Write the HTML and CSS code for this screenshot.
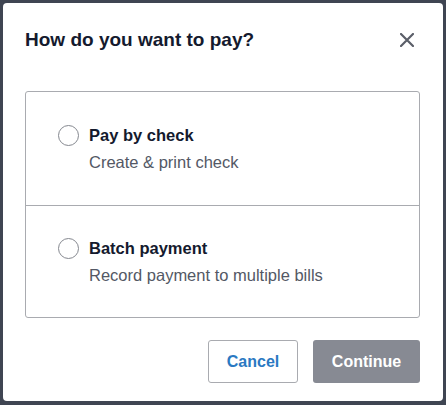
FILE: index.html
```html
<!DOCTYPE html>
<html>
<head>
    <title>How do you want to pay?</title>
    <link rel="stylesheet" href="styles.css">
</head>
<body>
    <div class="modal">
        <div class="modal-head">
            <h2>How do you want to pay?</h2>
            <button class="close" aria-label="Close">
                <svg width="14" height="14" viewBox="0 0 14 14"><path d="M1 1L13 13M13 1L1 13" stroke="#5b5f69" stroke-width="2.2" stroke-linecap="round"/></svg>
            </button>
        </div>
        <div class="options">
            <label class="option">
                <span class="radio"></span>
                <span class="text">
                    <span class="name">Pay by check</span>
                    <span class="desc">Create &amp; print check</span>
                </span>
            </label>
            <label class="option">
                <span class="radio"></span>
                <span class="text">
                    <span class="name">Batch payment</span>
                    <span class="desc">Record payment to multiple bills</span>
                </span>
            </label>
        </div>
        <div class="actions">
            <button class="btn btn-cancel">Cancel</button>
            <button class="btn btn-continue">Continue</button>
        </div>
    </div>
</body>
</html>
```

FILE: styles.css
```css
*{padding: 0;margin: 0;box-sizing: border-box;}
body{
    background: #3f4552;
    font-family: "Liberation Sans", Arial, sans-serif;
    padding: 3px;
}
.modal{
    width: 440px;
    height: 398px;
    background: #fff;
    border-radius: 4px;
    padding: 24px 23px 0 22px;
}
.modal-head{
    display: flex;
    align-items: center;
    justify-content: space-between;
    height: 26px;
}
.modal-head h2{
    font-size: 19px;
    font-weight: bold;
    color: #141a2e;
    line-height: 26px;
}
.close{
    border: none;
    background: none;
    width: 20px;
    height: 20px;
    display: flex;
    align-items: center;
    justify-content: center;
    margin-right: 3px;
}
.options{
    margin-top: 38px;
    border: 1px solid #a9abb0;
    border-radius: 3px;
}
.option{
    display: flex;
    align-items: flex-start;
    height: 113px;
    padding: 33px 0 0 32px;
}
.option + .option{
    border-top: 1px solid #a9abb0;
    height: 112px;
    padding-top: 32px;
}
.radio{
    width: 21px;
    height: 21px;
    border: 1px solid #85888f;
    border-radius: 50%;
    margin-right: 10px;
    flex: none;
}
.text{
    display: flex;
    flex-direction: column;
}
.name{
    font-size: 16.5px;
    font-weight: bold;
    color: #141a2e;
    line-height: 21px;
}
.desc{
    font-size: 16.5px;
    color: #535865;
    line-height: 20px;
    margin-top: 6px;
}
.actions{
    display: flex;
    justify-content: flex-end;
    gap: 15px;
    margin-top: 22px;
}
.btn{
    height: 43px;
    border-radius: 3px;
    font-family: "Liberation Sans", Arial, sans-serif;
    font-size: 16px;
    font-weight: bold;
}
.btn-cancel{
    width: 90px;
    background: #fff;
    border: 1px solid #a9abb0;
    color: #2a79c2;
}
.btn-continue{
    width: 107px;
    background: #878a93;
    border: none;
    color: #fff;
}
```
